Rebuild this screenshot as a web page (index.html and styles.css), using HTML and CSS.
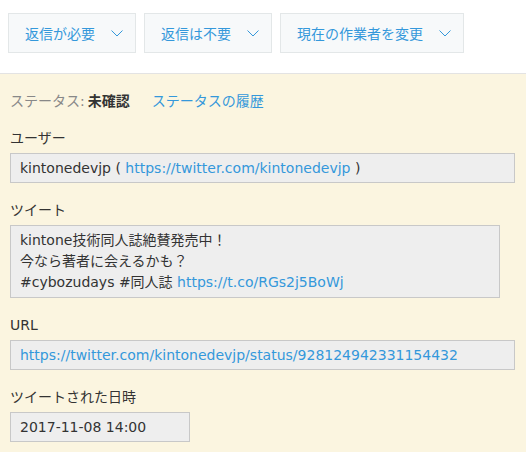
FILE: index.html
```html
<!DOCTYPE html>
<html lang="ja">
<head>
<meta charset="utf-8">
<link rel="stylesheet" href="styles.css">
</head>
<body>
<div class="toolbar">
  <button class="action">返信が必要<svg class="chev" viewBox="0 0 12 7" width="12" height="7"><path d="M0.5 0.5 L6 6 L11.5 0.5" fill="none" stroke="#3498db" stroke-width="1"/></svg></button>
  <button class="action">返信は不要<svg class="chev" viewBox="0 0 12 7" width="12" height="7"><path d="M0.5 0.5 L6 6 L11.5 0.5" fill="none" stroke="#3498db" stroke-width="1"/></svg></button>
  <button class="action">現在の作業者を変更<svg class="chev" viewBox="0 0 12 7" width="12" height="7"><path d="M0.5 0.5 L6 6 L11.5 0.5" fill="none" stroke="#3498db" stroke-width="1"/></svg></button>
</div>
<div class="panel">
  <div class="status">
    <span class="status-label">ステータス:</span>
    <span class="status-value">未確認</span>
    <a class="link status-history">ステータスの履歴</a>
  </div>
  <div class="group">
    <div class="label">ユーザー</div>
    <div class="field w-wide">kintonedevjp ( <a class="link">https://twitter.com/kintonedevjp</a> )</div>
  </div>
  <div class="group">
    <div class="label">ツイート</div>
    <div class="field multi w-tweet">kintone技術同人誌絶賛発売中！<br>今なら著者に会えるかも？<br>#cybozudays #同人誌 <a class="link">https://t.co/RGs2j5BoWj</a></div>
  </div>
  <div class="group">
    <div class="label">URL</div>
    <div class="field w-wide"><a class="link">https://twitter.com/kintonedevjp/status/928124942331154432</a></div>
  </div>
  <div class="group">
    <div class="label">ツイートされた日時</div>
    <div class="field w-date">2017-11-08 14:00</div>
  </div>
</div>
</body>
</html>
```
FILE: styles.css
```css
html, body {
  margin: 0;
  padding: 0;
  background: #ffffff;
}
body {
  font-family: "DejaVu Sans", "Noto Sans CJK JP", sans-serif;
  font-size: 14px;
  color: #333333;
  width: 526px;
  height: 452px;
  overflow: hidden;
  display: flex;
  flex-direction: column;
}
.toolbar {
  display: flex;
  gap: 8px;
  padding: 13px 8px 20px 8px;
}
.action {
  display: flex;
  align-items: center;
  gap: 16px;
  height: 40px;
  box-sizing: border-box;
  padding: 0 12px 0 16px;
  background: #f7f9fa;
  border: 1px solid #e3e7e8;
  border-radius: 0;
  color: #3498db;
  font-family: "Noto Sans CJK JP", sans-serif;
  font-size: 14px;
  line-height: 20px;
}
.chev {
  display: block;
  margin-top: 1px;
}
.panel {
  flex: 1;
  border-top: 1px solid #e3e3e3;
  background: #fbf5e0;
  padding: 17px 10px 0 10px;
}
.status {
  line-height: 20px;
  display: flex;
  align-items: center;
}
.status-label {
  color: #888888;
}
.status-value {
  font-weight: bold;
  color: #333333;
  margin-left: 3px;
}
.status-history {
  margin-left: 22px;
}
.link {
  color: #3498db;
}
.group {
  margin-top: 17px;
}
.label {
  line-height: 20px;
  margin-bottom: 5px;
  color: #333333;
}
.field {
  box-sizing: border-box;
  background: #eeeeee;
  border: 1px solid #c8c8c8;
  padding: 4px 9px;
  line-height: 20px;
}
.field.multi {
  line-height: 21px;
}
.w-wide { width: 505px; }
.w-tweet { width: 490px; }
.w-date { width: 180px; }
```
